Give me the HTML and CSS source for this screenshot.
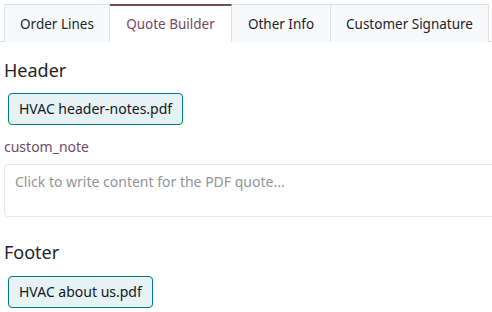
FILE: index.html
```html
<!DOCTYPE html>
<html lang="en">
<head>
    <meta charset="UTF-8">
    <meta name="viewport" content="width=device-width, initial-scale=1.0">
    <title>Quote Builder</title>
    <link rel="stylesheet" href="styles.css">
</head>
<body>
    <div class="tabs">
        <div class="tab">Order Lines</div>
        <div class="tab active">Quote Builder</div>
        <div class="tab">Other Info</div>
        <div class="tab">Customer Signature</div>
    </div>

    <div class="content">
        <h2 class="section-title">Header</h2>
        <div class="docs">
            <span class="doc">HVAC header-notes.pdf</span>
        </div>

        <div class="field-label">custom_note</div>
        <div class="note">Click to write content for the PDF quote...</div>

        <h2 class="section-title footer">Footer</h2>
        <div class="docs">
            <span class="doc">HVAC about us.pdf</span>
        </div>
    </div>
</body>
</html>
```

FILE: styles.css
```css
body {
    margin: 0;
    padding: 4px 0 0 0;
    font-family: 'Noto Sans', 'Open Sans', sans-serif;
    font-size: 14px;
    color: #212529;
    background: #fff;
    width: 492px;
    height: 312px;
    overflow: hidden;
}

.tabs {
    display: flex;
    border-bottom: 1px solid #dee2e6;
    padding-left: 4px;
}

.tab {
    flex-shrink: 0;
    height: 38px;
    box-sizing: border-box;
    display: flex;
    align-items: center;
    justify-content: center;
    background: #f8f9fa;
    border: 1px solid #dee2e6;
    border-bottom: none;
    margin-bottom: -1px;
    color: #212529;
    white-space: nowrap;
    font-size: 13.5px;
}

.tab + .tab {
    border-left: none;
}

.tab:nth-child(1) { width: 106px; }
.tab:nth-child(2) { width: 122px; }
.tab:nth-child(3) { width: 99px; }
.tab:nth-child(4) { width: 158px; }

.tab.active {
    background: #fff;
    color: #714b67;
    border-top: 2px solid #714b67;
}

.content {
    padding: 0 4px;
}

.section-title {
    font-size: 18px;
    font-weight: 400;
    margin: 16px 0 11px 0;
    line-height: 24px;
}

.section-title.footer {
    margin-top: 23px;
    margin-bottom: 12px;
}

.docs {
    padding-left: 4px;
}

.doc {
    display: inline-block;
    background: #e6f2f3;
    border: 1px solid #017e84;
    border-radius: 4px;
    padding: 0 10px;
    line-height: 30px;
    color: #111827;
}

.field-label {
    color: #714b67;
    margin-top: 12px;
    line-height: 20px;
}

.note {
    margin-top: 7px;
    margin-right: -10px;
    height: 53px;
    box-sizing: border-box;
    border: 1px solid #e5e7eb;
    border-radius: 4px;
    padding: 7px 10px;
    color: #8f959a;
    line-height: 20px;
}
```
